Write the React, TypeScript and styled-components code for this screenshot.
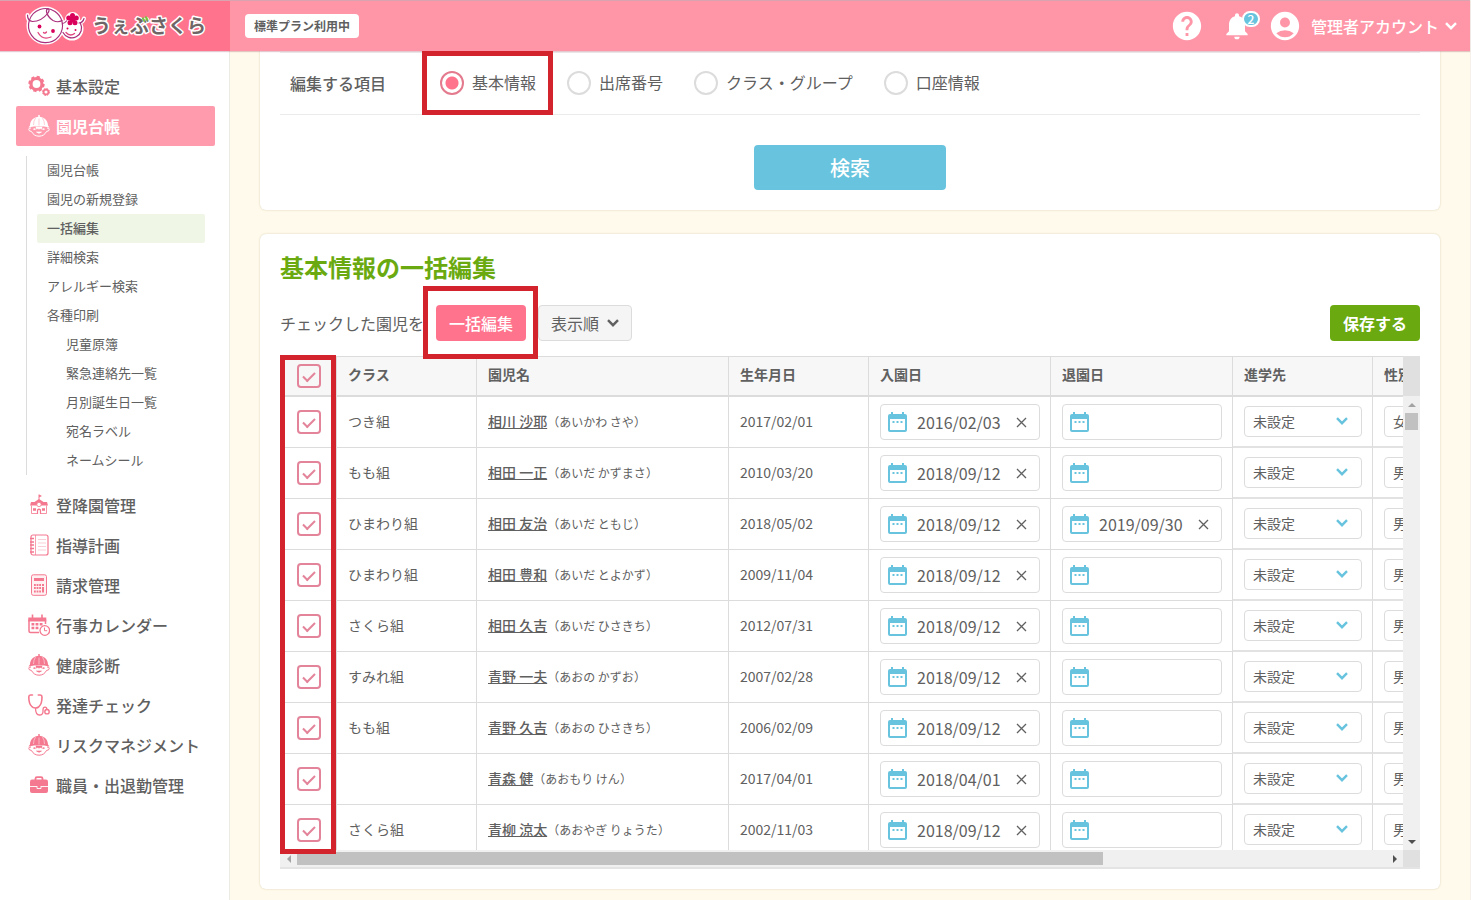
import React from "react";
import styled, { createGlobalStyle, css } from "styled-components";
import { MdHelp, MdNotifications, MdAccountCircle } from "react-icons/md";

const color = {
  pink: "#ff738d",
  pinkLight: "#ff96a8",
  icon: "#f4788f",
  text: "#606060",
  line: "#dcdcdc",
  green: "#6aaa10",
  blue: "#68c4de",
  red: "#d3232c",
};

const GlobalStyle = createGlobalStyle`
  * { box-sizing: border-box; }
  body {
    margin: 0;
    background: #fffaeb;
    color: ${color.text};
    font-family: "Noto Sans CJK JP", "Noto Sans", sans-serif;
    font-size: 16px;
  }
  button, input, select { font: inherit; color: inherit; margin: 0; }
  ul { list-style: none; margin: 0; padding: 0; }
  svg { display: block; flex: none; }
`;

const Page = styled.div`
  min-height: 100vh;
  border-right: 1px solid #f5f1ea;
`;

/* ---------- header ---------- */

const Header = styled.header`
  position: relative;
  z-index: 1;
  display: flex;
  height: 51px;
  background: ${color.pinkLight};
  border-top: 1px solid #d9a3af;
  box-shadow: 0 1px 1px rgba(160, 80, 100, 0.3);
`;

const Brand = styled.a`
  width: 230px;
  padding: 3px 0 0 24px;
  background: ${color.pink};
`;

const HeaderBar = styled.div`
  flex: 1;
  display: flex;
  align-items: center;
  padding: 0 13px 0 15px;
  color: #fff;
`;

const PlanBadge = styled.span`
  margin-right: auto;
  padding: 0 9px;
  border-radius: 4px;
  background: #fff;
  color: ${color.text};
  font-size: 12px;
  font-weight: 700;
  line-height: 24px;
`;

const HeaderButton = styled.button`
  position: relative;
  display: flex;
  align-items: center;
  padding: 0;
  border: 0;
  background: none;
  color: #fff;
  font-weight: 500;
  line-height: 24px;
  cursor: pointer;
`;

const BellButton = styled(HeaderButton)`
  margin: 0 15px 0 17px;
`;

const AccountButton = styled(HeaderButton)`
  gap: 6px;
`;

const AccountName = styled.span`
  margin-left: 3px;
`;

const Count = styled.span`
  position: absolute;
  top: 1px;
  right: -7px;
  width: 18px;
  height: 16px;
  border: 2px solid #fff;
  border-radius: 8px;
  background: ${color.blue};
  font-size: 12px;
  line-height: 12px;
  text-align: center;
`;

/* ---------- sidebar ---------- */

const Body = styled.div`
  display: flex;
  min-height: calc(100vh - 51px);
`;

const Sidebar = styled.nav`
  flex: none;
  width: 230px;
  padding: 15px 14px 24px 16px;
  border-right: 1px solid #eceae4;
  background: #fff;
`;

const MenuLink = styled.a<{ $active?: boolean }>`
  display: flex;
  align-items: center;
  gap: 6px;
  height: 40px;
  padding: 0 12px;
  border-radius: 2px;
  color: ${(p) => (p.$active ? "#fff" : color.text)};
  background: ${(p) => (p.$active ? "#ff9bad" : "none")};
  font-weight: ${(p) => (p.$active ? 700 : 500)};
  text-decoration: none;
  white-space: nowrap;

  svg {
    color: ${(p) => (p.$active ? "#fff" : color.icon)};
  }
`;

const SubMenu = styled.ul`
  margin: 10px;
  padding-left: 10px;
  border-left: 1px solid ${color.line};
`;

const SubLink = styled.a<{ $active?: boolean; $nested?: boolean }>`
  display: block;
  padding: 0 0 2px ${(p) => (p.$nested ? 29 : 10)}px;
  border-radius: 2px;
  background: ${(p) => (p.$active ? "#eff6e6" : "none")};
  color: ${color.text};
  font-size: 13px;
  font-weight: ${(p) => (p.$active ? 500 : 400)};
  line-height: 27px;
  text-decoration: none;
`;

/* ---------- content ---------- */

const Main = styled.main`
  flex: 1;
  min-width: 0;
  padding: 0 30px 11px;
`;

const Card = styled.section<{ $top?: boolean }>`
  padding: ${(p) => (p.$top ? "1px 20px 20px" : "20px")};
  border-radius: ${(p) => (p.$top ? "0 0 6px 6px" : "6px")};
  background: #fff;
  box-shadow: 0 0 2px rgba(120, 100, 60, 0.3);

  & + & {
    margin-top: 24px;
  }
`;

const FieldRow = styled.div`
  display: flex;
  align-items: center;
  height: 63px;
  padding-bottom: 2px;
  border-top: 1px solid #efefef;
  border-bottom: 1px solid #ebebeb;
`;

const FieldName = styled.div`
  width: 160px;
  padding-left: 10px;
  font-weight: 500;
`;

const RadioGroup = styled.div`
  display: flex;
  gap: 31px;
`;

const RadioLabel = styled.label`
  position: relative;
  display: flex;
  gap: 8px;
  height: 24px;
  line-height: 22px;
`;

const Radio = styled.input.attrs({ type: "radio" })`
  appearance: none;
  width: 24px;
  height: 24px;
  border: 2px solid ${color.line};
  border-radius: 50%;
  background: #fff;

  &:checked {
    border-color: #e47a8e;
    background: radial-gradient(circle, ${color.pink} 6px, #fff 7px);
  }
`;

const Highlight = styled.span<{ $inset: string; $width?: string }>`
  position: absolute;
  inset: ${(p) => p.$inset};
  z-index: 1;
  width: ${(p) => p.$width ?? "auto"};
  border: 5px solid ${color.red};
  pointer-events: none;
`;

const Button = styled.button<{ $tone: "pink" | "green" | "gray" | "search" }>`
  display: flex;
  align-items: center;
  justify-content: center;
  gap: 8px;
  height: 36px;
  padding: 0 12px;
  border: 1px solid transparent;
  border-radius: 4px;
  color: #fff;
  font-weight: 500;
  line-height: 24px;
  cursor: pointer;
  ${(p) => p.$tone === "pink" && css`background: ${color.pink};`}
  ${(p) => p.$tone === "green" && css`
    background: ${color.green};
    font-weight: 700;
  `}
  ${(p) => p.$tone === "gray" && css`
    background: #f5f5f5;
    border-color: ${color.line};
    color: ${color.text};
    font-weight: 400;
  `}
  ${(p) => p.$tone === "search" && css`
    width: 192px;
    height: 45px;
    margin: 30px auto 0;
    background: ${color.blue};
    font-size: 20px;
  `}
`;

const Title = styled.h2`
  margin: 0;
  padding-bottom: 2px;
  color: ${color.green};
  font-size: 24px;
  font-weight: 700;
  line-height: 26px;
`;

const Toolbar = styled.div`
  display: flex;
  align-items: center;
  gap: 12px;
  margin: 23px 0 15px;
`;

const Anchor = styled.div`
  position: relative;
`;

const ToolbarEnd = styled.div`
  margin-left: auto;
`;

/* ---------- table ---------- */

const Pane = styled.div`
  position: relative;
  display: grid;
  grid-template-columns: minmax(0, 1fr) 17px;
  grid-template-rows: 40px 454px 17px;
  border-bottom: 2px solid #e4e4e4;
`;

const TableView = styled.div`
  grid-row: 1 / 3;
  overflow: hidden;
`;

const Corner = styled.div`
  background: #e0e0e0;
`;

const ScrollTrack = styled.div<{ $vertical?: boolean }>`
  display: flex;
  flex-direction: ${(p) => (p.$vertical ? "column" : "row")};
  align-items: center;
  background: #f0f0f0;
`;

const ArrowBox = styled.span`
  display: flex;
  align-items: center;
  justify-content: center;
  width: 17px;
  height: 17px;
`;

const VThumb = styled.span`
  width: 13px;
  height: 17px;
  margin-bottom: auto;
  background: #c1c1c1;
`;

const HRail = styled.span`
  flex: 1;
`;

const HThumb = styled.span`
  display: block;
  width: 74%;
  height: 13px;
  background: #c1c1c1;
`;

const Table = styled.table`
  width: 1233px;
  table-layout: fixed;
  border-collapse: separate;
  border-spacing: 0;
  font-size: 14px;
  line-height: 20px;
`;

const Th = styled.th<{ $w: number; $control?: boolean }>`
  width: ${(p) => p.$w}px;
  height: 41px;
  padding: 0 10px ${(p) => (p.$control ? 0 : 4)}px 11px;
  border: solid ${color.line};
  border-width: 1px 1px 2px 0;
  background: #f7f7f7;
  font-weight: 700;
  text-align: left;
`;

const Td = styled.td<{ $kind?: "text" | "select" }>`
  height: 51px;
  padding: 0 10px 0 11px;
  border: solid ${color.line};
  border-width: 0 1px 1px 0;
  white-space: nowrap;
  ${(p) => p.$kind === "text" && css`padding-bottom: 2px;`}
  ${(p) => p.$kind === "select" && css`
    padding-bottom: 1px;
    border-bottom: 2px solid #e2e2e2;
  `}
`;

const CheckBox = styled.input.attrs({ type: "checkbox" })`
  appearance: none;
  display: grid;
  place-items: center;
  width: 24px;
  height: 24px;
  margin-left: 6px;
  border: 2px solid #e3849a;
  border-radius: 4px;
  background: #fff;

  &:checked::after {
    content: "";
    width: 10px;
    height: 5px;
    margin-bottom: 2px;
    border: solid #e3849a;
    border-width: 0 0 2px 2px;
    transform: rotate(-45deg);
  }
`;

const HeadCheckBox = styled(CheckBox)`
  background: #f7f7f7;
`;

const NameLink = styled.a`
  color: inherit;
  font-weight: 500;
  text-decoration: underline;
`;

const Kana = styled.span`
  font-size: 12px;
`;

const DateBox = styled.div`
  display: flex;
  align-items: center;
  width: 160px;
  height: 36px;
  padding: 0 7px;
  border: 1px solid ${color.line};
  border-radius: 4px;
  background: #fff;
`;

const DateInput = styled.input`
  flex: 1;
  min-width: 0;
  height: 34px;
  padding: 0 0 0 10px;
  border: 0;
  background: none;
  font-size: 16px;
`;

const ClearButton = styled.button`
  padding: 5px;
  border: 0;
  background: none;
  cursor: pointer;
`;

const SelectBox = styled.div<{ $w: number }>`
  position: relative;
  width: ${(p) => p.$w}px;

  svg {
    position: absolute;
    top: 11px;
    right: 14px;
    pointer-events: none;
  }
`;

const Select = styled.select`
  appearance: none;
  display: block;
  width: 100%;
  height: 31px;
  padding: 0 8px 1px;
  border: 1px solid ${color.line};
  border-radius: 4px;
  background: #fff;
  font-size: 14px;
`;

/* ---------- drawings ---------- */

const Chevron = ({ stroke = "currentColor" }: { stroke?: string }) => (
  <svg width="12" height="8" viewBox="0 0 12 8" fill="none" stroke={stroke} strokeWidth="2.400">
    <path d="M1 1.200 6 6.200 11 1.200" />
  </svg>
);

const DateIcon = () => (
  <svg width="19" height="20" viewBox="0 0 19 20">
    <path
      fill={color.blue}
      fillRule="evenodd"
      d="M3 0h2v2h9V0h2v2h1a2 2 0 0 1 2 2v14a2 2 0 0 1-2 2H2a2 2 0 0 1-2-2V4a2 2 0 0 1 2-2h1zM2 7v11h15V7z"
    />
    <path stroke={color.blue} strokeWidth="2" strokeDasharray="2 2" d="M4.500 10h10" />
  </svg>
);

const CloseIcon = () => (
  <svg width="11" height="11" viewBox="0 0 11 11" stroke="#606060" strokeWidth="1.300">
    <path d="M1 1l9 9M10 1l-9 9" />
  </svg>
);

const Arrow = ({ d, fill }: { d: string; fill: string }) => (
  <svg width="8" height="8" viewBox="0 0 8 8" fill={fill}>
    <path d={d} />
  </svg>
);

const Logo = () => (
  <svg width="190" height="44" viewBox="0 0 190 44" role="img" aria-label="うぇぶさくら">
    <g fill="#fff" stroke="#fff" strokeWidth="4" strokeLinejoin="round" strokeLinecap="round">
      <circle cx="21.500" cy="21.500" r="17" />
      <circle cx="48" cy="25" r="9.500" />
      <path d="M3.500 11q0 6 4 6.500M56 18.500q3-.5 4-4" />
      <circle cx="48.500" cy="15.500" r="5.500" />
    </g>
    <g fill="none" stroke="#a8307c" strokeWidth="1.200" strokeLinecap="round">
      <path d="M38 17.500A17 17 0 1 1 31 7.500A17 17 0 0 1 38 17.500" />
      <path d="M3.500 11q0 6 5 6.500q9 0 15.500-8.500q2-3.500.2-4.300q-2 .2-1.700 3.300q1.500 5.500 6.500 8.500q5 2.500 9 0" />
      <path d="M39 28.500A9.500 9.500 0 1 0 56.500 19.500" />
      <path d="M55 19q4-.5 5-4.500M42.500 17q-2 2.500-4 2.500" />
    </g>
    <g fill="#d9005b">
      <circle cx="48.500" cy="15.500" r="3" />
      <circle cx="48.500" cy="11.500" r="2.500" />
      <circle cx="52.300" cy="14" r="2.500" />
      <circle cx="51" cy="18.700" r="2.500" />
      <circle cx="46" cy="18.700" r="2.500" />
      <circle cx="44.700" cy="14" r="2.500" />
      <circle cx="15.500" cy="22.500" r="1.900" />
      <circle cx="29" cy="27" r="1.900" />
      <circle cx="43.500" cy="24.500" r="1" />
      <circle cx="51.500" cy="26" r="1" />
    </g>
    <g fill="none" stroke="#e0447e" strokeWidth="1.300" strokeLinecap="round">
      <path d="M14 28.500q4.500 8 13 4.500" />
      <path d="M19.500 28.500q1.500 1.500 3-.5" />
      <path d="M42 28.500q4 4.500 8.500 1" />
    </g>
    <text
      x="68"
      y="29"
      fill="#6f6566"
      stroke="#fff"
      strokeWidth="3"
      strokeLinejoin="round"
      paintOrder="stroke"
      fontSize="19"
      fontWeight="700"
      fontFamily="Noto Sans CJK JP, sans-serif"
    >
      うぇぶさくら
    </text>
    <path d="M119 14.500l1.200 2.200M122 13.300l1.200 2.200" stroke="#7cc242" strokeWidth="2.200" strokeLinecap="round" />
  </svg>
);

const Icon = ({ children }: { children: React.ReactNode }) => (
  <svg width="22" height="22" viewBox="0 0 22 22" fill="none" stroke="currentColor" aria-hidden="true">
    {children}
  </svg>
);

const GearsIcon = () => (
  <Icon>
    <circle cx="8.500" cy="9" r="5.500" strokeWidth="3.200" />
    <circle cx="8.500" cy="9" r="7.200" strokeWidth="2" strokeDasharray="3.200 2.450" />
    <circle cx="18" cy="17" r="2.400" strokeWidth="1.700" />
    <circle cx="18" cy="17" r="3.500" strokeWidth="1" strokeDasharray="1.700 1.050" />
  </Icon>
);

const ChildIcon = ({ seam }: { seam: string }) => (
  <Icon>
    <path fill="currentColor" stroke="none" d="M2 10.500C2 5.500 6 1.700 11 1.700s9 3.800 9 8.800l1.500 2Q11 9.500.5 12.500z" />
    <path d="M7.500 3Q5.500 6 5.500 10M14.500 3Q16.500 6 16.500 10M11 3.500v7" stroke={seam} strokeWidth=".5" />
    <path d="M10 1h2" strokeWidth="1.400" />
    <path d="M3 13q-2.300-.3-2.200 1.500t2.600 1.900q2.500 4.800 7.600 4.800t7.600-4.800q2.500-.1 2.600-1.900T19 13" strokeWidth="1" />
    <path fill="currentColor" stroke="none" d="M7.500 11.500h7l-1 3-1.500-1-1 1.200-1-1.200-1.500 1z" />
    <path d="M5.500 14.500q1-1 2 0M14.500 14.500q1-1 2 0" strokeWidth="1.300" />
    <path d="M8.500 17h5q-2.500 2.500-5 0z" fill="currentColor" strokeWidth=".6" />
  </Icon>
);

const SchoolIcon = () => (
  <Icon>
    <path fill="currentColor" stroke="none" d="M10.500.5h.8l2.700 1.500-2.500 1.200v2.100L15.500 8H19l1 3.500H2L3 8h3.500l4-2.700z" />
    <path d="M3.500 11.500v8h6M18.500 11.500v8h-6" strokeWidth=".8" />
    <path d="M9.500 20v-4q1.500-1.500 3 0v4" strokeWidth="1.200" />
    <circle cx="11" cy="10.500" r="2.200" fill="#fff" strokeWidth=".8" />
    <path d="M5 15.500h3M14 15.500h3" strokeWidth="2.400" />
  </Icon>
);

const NotebookIcon = () => (
  <Icon>
    <rect x="3" y="1" width="17" height="20" rx="2" strokeWidth="1.200" />
    <path d="M7.500 1v20" strokeWidth=".7" />
    <path d="M10 5.500h8M10 9h8M10 12.500h8M10 16h8" strokeWidth=".6" opacity=".6" />
    <path d="M2 4.500h4M2 8h4M2 11h4M2 14.500h4M2 18h4" strokeWidth="1.300" />
  </Icon>
);

const CalculatorIcon = () => (
  <Icon>
    <rect x="3.500" y=".8" width="15" height="20.500" rx="1.800" strokeWidth="1" fill="#fff0f2" />
    <rect x="6" y="4" width="10" height="3" fill="currentColor" stroke="none" />
    <path d="M6 11h7M6 14h7M6 17.500h7" strokeWidth="1.800" strokeDasharray="1.800 .8" />
    <path d="M15 10v2M15 13v5.500" strokeWidth="2" />
  </Icon>
);

const CalendarIcon = () => (
  <Icon>
    <path d="M11 18.500H2.500Q1 18.500 1 17V5.500M17.500 5.500V10" strokeWidth="1.500" />
    <path fill="currentColor" stroke="none" d="M.3 3.500h18v4H.3z" />
    <path d="M4.500 .5v4M14 .5v4" strokeWidth="1.600" />
    <path d="M3.500 10.300h11M3.500 14h7" strokeWidth="2.600" strokeDasharray="2.800 1.300" />
    <circle cx="16.800" cy="16.500" r="4.800" fill="#fff" strokeWidth="1.300" />
    <path d="M16.500 13.500v3.200h2.700" strokeWidth="1" />
  </Icon>
);

const StethoscopeIcon = () => (
  <Icon>
    <path d="M4.500 1H2.500Q.8 1.200.8 3q0 7 3 9.500Q5 14 7.500 14T11 12.500Q14 10 14 3q0-1.800-1.700-2h-2" strokeWidth="1.600" strokeLinecap="round" />
    <path d="M7.500 14Q7.500 21 11.500 21q3.500 0 3.500-3.500v-1.500q0-2.800 2-2.800 1.700 0 2 2.300" strokeWidth="1.300" />
    <circle cx="19" cy="17.700" r="2.200" strokeWidth="1.400" />
  </Icon>
);

const BriefcaseIcon = () => (
  <Icon>
    <path d="M7.500 6V4.500Q7.500 3.200 9 3.200h4q1.500 0 1.500 1.300V6" strokeWidth="1.800" />
    <rect x="2" y="5.500" width="18" height="13.500" rx="2" fill="currentColor" stroke="none" />
    <path d="M2 12.500h7M13 12.500h7" stroke="#fff" strokeWidth=".9" />
    <path d="M9 12v2.500h4V12" stroke="#fff" strokeWidth=".9" />
  </Icon>
);

/* ---------- data ---------- */

const subItems = [
  { label: "園児台帳" },
  { label: "園児の新規登録" },
  { label: "一括編集", active: true },
  { label: "詳細検索" },
  { label: "アレルギー検索" },
  { label: "各種印刷" },
  { label: "児童原簿", nested: true },
  { label: "緊急連絡先一覧", nested: true },
  { label: "月別誕生日一覧", nested: true },
  { label: "宛名ラベル", nested: true },
  { label: "ネームシール", nested: true },
];

const lowerMenu = [
  { label: "登降園管理", icon: <SchoolIcon /> },
  { label: "指導計画", icon: <NotebookIcon /> },
  { label: "請求管理", icon: <CalculatorIcon /> },
  { label: "行事カレンダー", icon: <CalendarIcon /> },
  { label: "健康診断", icon: <ChildIcon seam="#fff" /> },
  { label: "発達チェック", icon: <StethoscopeIcon /> },
  { label: "リスクマネジメント", icon: <ChildIcon seam="#fff" /> },
  { label: "職員・出退勤管理", icon: <BriefcaseIcon /> },
];

const targets = ["基本情報", "出席番号", "クラス・グループ", "口座情報"];

const columns: [string, number][] = [
  ["クラス", 140],
  ["園児名", 252],
  ["生年月日", 140],
  ["入園日", 182],
  ["退園日", 182],
  ["進学先", 140],
  ["性別", 140],
];

type Child = { cls: string; name: string; kana: string; birth: string; enter: string; leave?: string; sex: string };

const children: Child[] = [
  { cls: "つき組", name: "相川 沙耶", kana: "あいかわ さや", birth: "2017/02/01", enter: "2016/02/03", sex: "女" },
  { cls: "もも組", name: "相田 一正", kana: "あいだ かずまさ", birth: "2010/03/20", enter: "2018/09/12", sex: "男" },
  { cls: "ひまわり組", name: "相田 友治", kana: "あいだ ともじ", birth: "2018/05/02", enter: "2018/09/12", leave: "2019/09/30", sex: "男" },
  { cls: "ひまわり組", name: "相田 豊和", kana: "あいだ とよかず", birth: "2009/11/04", enter: "2018/09/12", sex: "男" },
  { cls: "さくら組", name: "相田 久吉", kana: "あいだ ひさきち", birth: "2012/07/31", enter: "2018/09/12", sex: "男" },
  { cls: "すみれ組", name: "青野 一夫", kana: "あおの かずお", birth: "2007/02/28", enter: "2018/09/12", sex: "男" },
  { cls: "もも組", name: "青野 久吉", kana: "あおの ひさきち", birth: "2006/02/09", enter: "2018/09/12", sex: "男" },
  { cls: "", name: "青森 健", kana: "あおもり けん", birth: "2017/04/01", enter: "2018/04/01", sex: "男" },
  { cls: "さくら組", name: "青柳 涼太", kana: "あおやぎ りょうた", birth: "2002/11/03", enter: "2018/09/12", sex: "男" },
];

const DateField = ({ label, value }: { label: string; value?: string }) => (
  <DateBox>
    <DateIcon />
    <DateInput aria-label={label} defaultValue={value} />
    {value && (
      <ClearButton type="button" aria-label={`${label}を消去`}>
        <CloseIcon />
      </ClearButton>
    )}
  </DateBox>
);

export default function App() {
  return (
    <Page>
      <GlobalStyle />
      <Header>
        <Brand href="#">
          <Logo />
        </Brand>
        <HeaderBar>
          <PlanBadge>標準プラン利用中</PlanBadge>
          <HeaderButton type="button" aria-label="ヘルプ">
            <MdHelp size={34} />
          </HeaderButton>
          <BellButton type="button" aria-label="お知らせ">
            <MdNotifications size={32} />
            <Count>2</Count>
          </BellButton>
          <AccountButton type="button">
            <MdAccountCircle size={34} />
            <AccountName>管理者アカウント</AccountName>
            <Chevron />
          </AccountButton>
        </HeaderBar>
      </Header>
      <Body>
        <Sidebar>
          <MenuLink href="#">
            <GearsIcon />
            基本設定
          </MenuLink>
          <MenuLink href="#" $active>
            <ChildIcon seam="#ff9bad" />
            園児台帳
          </MenuLink>
          <SubMenu>
            {subItems.map((s) => (
              <li key={s.label}>
                <SubLink href="#" $active={s.active} $nested={s.nested}>
                  {s.label}
                </SubLink>
              </li>
            ))}
          </SubMenu>
          {lowerMenu.map((m) => (
            <MenuLink href="#" key={m.label}>
              {m.icon}
              {m.label}
            </MenuLink>
          ))}
        </Sidebar>
        <Main>
          <Card $top>
            <FieldRow>
              <FieldName>編集する項目</FieldName>
              <RadioGroup role="radiogroup" aria-label="編集する項目">
                {targets.map((t, i) => (
                  <RadioLabel key={t}>
                    <Radio name="target" defaultChecked={i === 0} />
                    {t}
                    {i === 0 && <Highlight $inset="-20px -17px -20px -18px" />}
                  </RadioLabel>
                ))}
              </RadioGroup>
            </FieldRow>
            <Button type="button" $tone="search">
              検索
            </Button>
          </Card>
          <Card>
            <Title>基本情報の一括編集</Title>
            <Toolbar>
              <span>チェックした園児を</span>
              <Anchor>
                <Button type="button" $tone="pink">
                  一括編集
                </Button>
                <Highlight $inset="-19px -12px -18px -13px" />
              </Anchor>
              <Button type="button" $tone="gray">
                表示順
                <Chevron />
              </Button>
              <ToolbarEnd>
                <Button type="button" $tone="green">
                  保存する
                </Button>
              </ToolbarEnd>
            </Toolbar>
            <Pane>
              <TableView>
                <Table>
                  <thead>
                    <tr>
                      <Th $w={57} $control>
                        <HeadCheckBox aria-label="すべて選択" defaultChecked />
                      </Th>
                      {columns.map(([name, w]) => (
                        <Th key={name} $w={w}>
                          {name}
                        </Th>
                      ))}
                    </tr>
                  </thead>
                  <tbody>
                    {children.map((c) => (
                      <tr key={c.name}>
                        <Td>
                          <CheckBox aria-label={c.name} defaultChecked />
                        </Td>
                        <Td $kind="text">{c.cls}</Td>
                        <Td $kind="text">
                          <NameLink href="#">{c.name}</NameLink>
                          <Kana>（{c.kana}）</Kana>
                        </Td>
                        <Td $kind="text">{c.birth}</Td>
                        <Td>
                          <DateField label="入園日" value={c.enter} />
                        </Td>
                        <Td>
                          <DateField label="退園日" value={c.leave} />
                        </Td>
                        <Td $kind="select">
                          <SelectBox $w={118}>
                            <Select aria-label="進学先">
                              <option>未設定</option>
                            </Select>
                            <Chevron stroke={color.blue} />
                          </SelectBox>
                        </Td>
                        <Td $kind="select">
                          <SelectBox $w={70}>
                            <Select aria-label="性別" defaultValue={c.sex}>
                              <option>男</option>
                              <option>女</option>
                            </Select>
                            <Chevron stroke={color.blue} />
                          </SelectBox>
                        </Td>
                      </tr>
                    ))}
                  </tbody>
                </Table>
              </TableView>
              <Corner />
              <ScrollTrack $vertical>
                <ArrowBox>
                  <Arrow d="M0 6h8L4 2z" fill="#a3a3a3" />
                </ArrowBox>
                <VThumb />
                <ArrowBox>
                  <Arrow d="M0 2h8L4 6z" fill="#505050" />
                </ArrowBox>
              </ScrollTrack>
              <ScrollTrack>
                <ArrowBox>
                  <Arrow d="M6 0v8L2 4z" fill="#a3a3a3" />
                </ArrowBox>
                <HRail>
                  <HThumb />
                </HRail>
                <ArrowBox>
                  <Arrow d="M2 0v8l4-4z" fill="#505050" />
                </ArrowBox>
              </ScrollTrack>
              <Corner />
              <Highlight $inset="-1px auto 13px 0" $width="56px" />
            </Pane>
          </Card>
        </Main>
      </Body>
    </Page>
  );
}
